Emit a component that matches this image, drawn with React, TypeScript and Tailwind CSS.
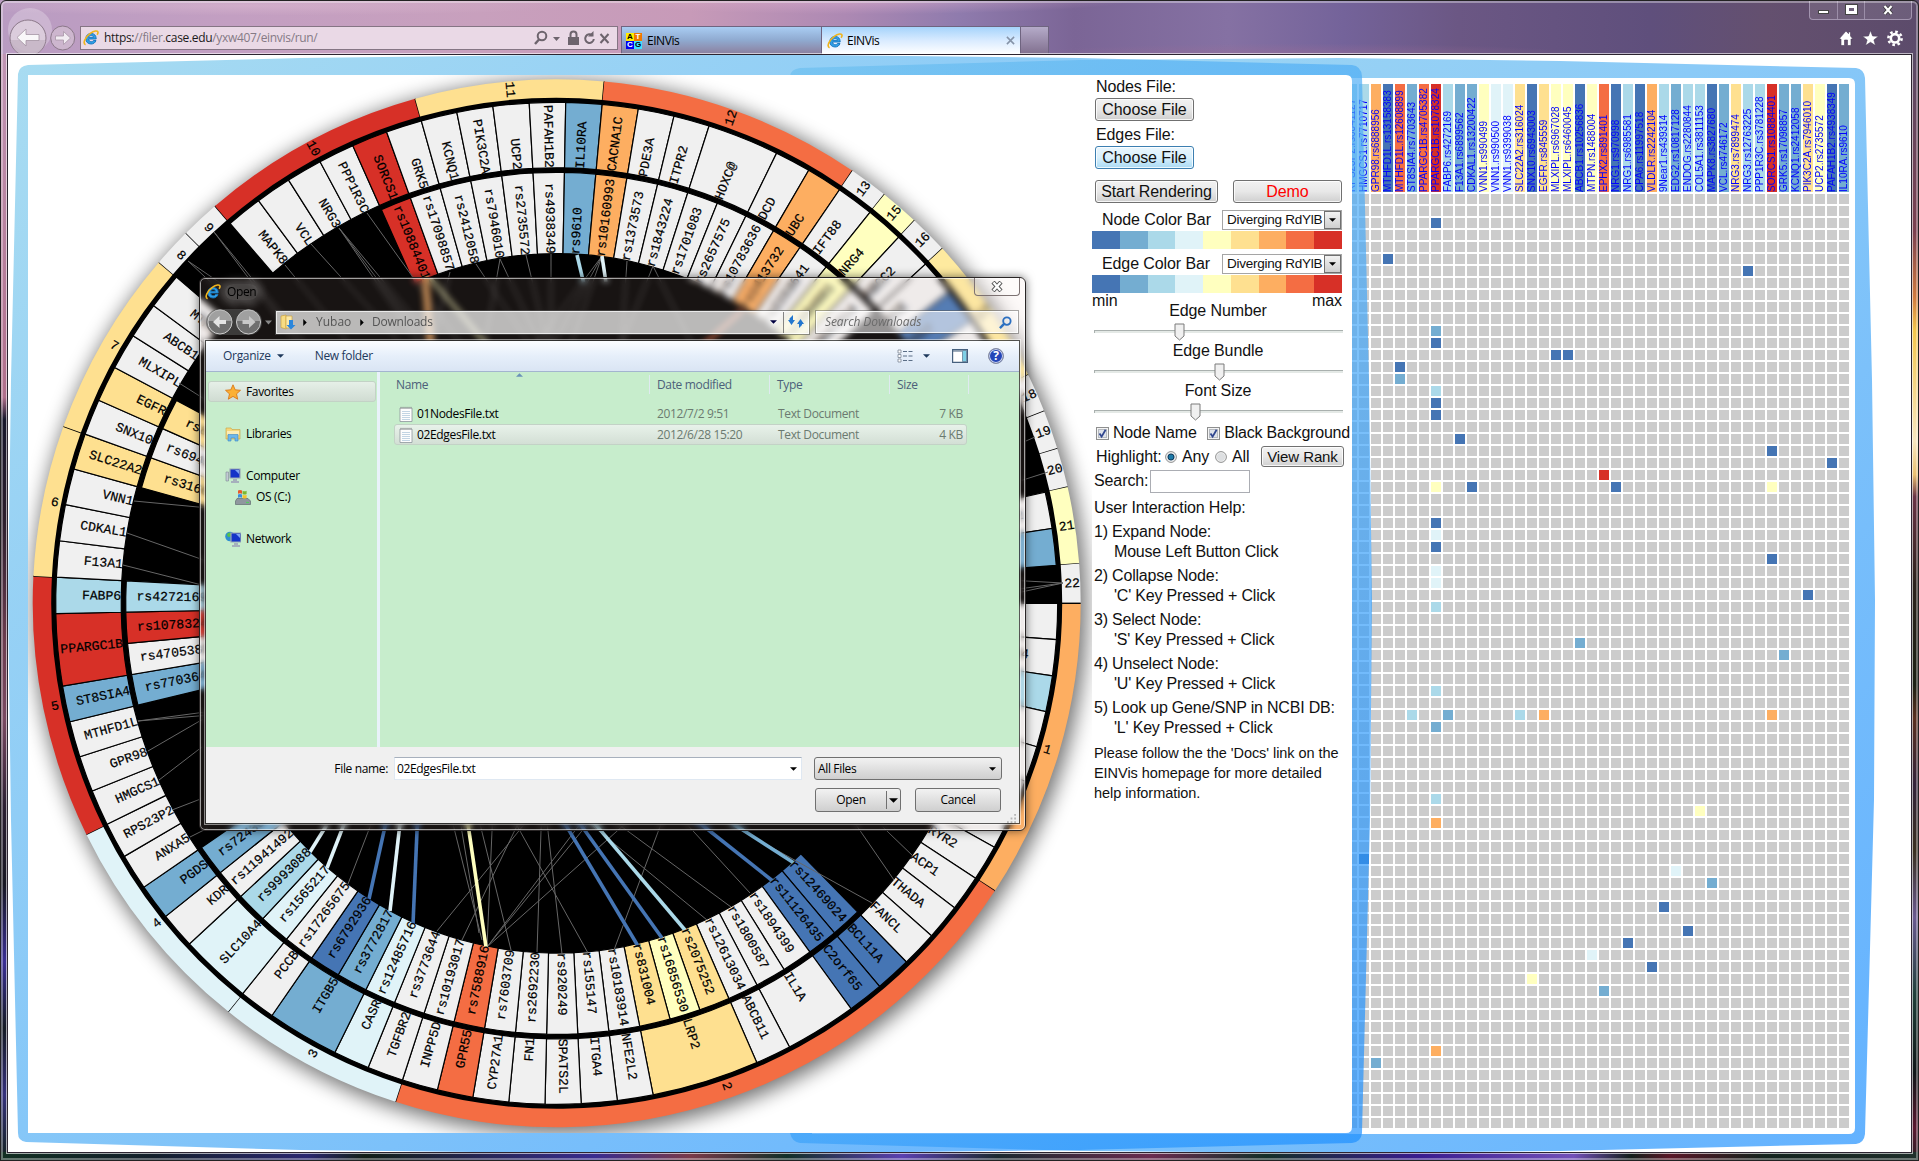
import React from "react";

const B = "#4575b4";
const M = "#74add1";
const L = "#abd9e9";
const P = "#e0f3f8";
const Y = "#ffffbf";
const G = "#fee090";
const O = "#fdae61";
const V = "#f46d43";
const R = "#d73027";
const N = "#f0f0f0";

const scaleColors = [B, M, L, P, Y, G, O, V, R];

/* ---------- Circular network view ---------- */

type Snp = [string, string];
type Gene = { n: string; c?: string; s?: Snp[] };
type Chrom = { n: string; c: string; g?: Gene[]; closed?: boolean };

const g = (n: string, c: string = N, ...s: Snp[]): Gene => ({ n, c, s });

const chroms: Chrom[] = [
  { n: "1", c: O, g: [g("PEX"), g("CD244"), g("CRP", L), g("F5"), g("FMO3"), g("LEP"), g("IL10"), g("RYR2")] },
  {
    n: "2",
    c: V,
    g: [
      g("ACP1"),
      g("THADA"),
      g("FANCL"),
      g("BCL11A", B, ["rs12469024", B]),
      g("C2orf65", B, ["rs11126435", B]),
      g("IL1A", N, ["rs1894399", N], ["rs1800587", N]),
      g("ABCB11", N, ["rs12613034", N]),
      g("LRP2", G, ["rs2075252", G], ["rs16856530", Y], ["rs831004", G]),
      g("NFE2L2", N, ["rs10183914", N]),
      g("ITGA4", N, ["rs155147", N]),
      g("SPATS2L", N, ["rs920249", N]),
      g("FN1", N, ["rs2692230", N]),
      g("CYP27A1", N, ["rs7603709", N]),
      g("GPR55", V, ["rs7588916", V]),
      g("INPP5D", N, ["rs10193017", N]),
    ],
  },
  {
    n: "3",
    c: P,
    g: [
      g("TGFBR2", N, ["rs3773644", N]),
      g("CASR", P, ["rs12485716", P]),
      g("ITGB5", M, ["rs3772817", M], ["rs6792936", B]),
      g("PCCB", N, ["rs17265675", N]),
    ],
  },
  {
    n: "4",
    c: P,
    g: [
      g("SLC10A4", P, ["rs1565217", P], ["rs9993088", L]),
      g("KDR", N, ["rs11941492", N]),
      g("PGDS", M, ["rs7243041", M]),
      g("ANXA5"),
      g("RPS23P2"),
    ],
  },
  {
    n: "5",
    c: R,
    g: [
      g("HMGCS1"),
      g("GPR98"),
      g("MTHFD1L"),
      g("ST8SIA4", M, ["rs7703643", M]),
      g("PPARGC1B", R, ["rs4705382", N], ["rs1078324", R]),
      g("FABP6", L, ["rs4272169", L]),
    ],
  },
  { n: "6", c: G, g: [g("F13A1"), g("CDKAL1"), g("VNN1"), g("SLC22A2", G, ["rs316024", G])] },
  {
    n: "7",
    c: G,
    g: [g("SNX10", N, ["rs6943003", N]), g("EGFR", G, ["rs845559", G]), g("MLXIPL"), g("ABCB1"), g("MTPN")],
  },
  { n: "8", c: N, closed: true },
  { n: "9", c: N, closed: true },
  {
    n: "10",
    c: R,
    g: [
      g("MAPK8"),
      g("VCL"),
      g("NRG3"),
      g("PPP1R3C"),
      g("SORCS1", R, ["rs10884401", R]),
      g("GRK5", N, ["rs17098857", N]),
    ],
  },
  {
    n: "11",
    c: G,
    g: [
      g("KCNQ1", N, ["rs2412058", N]),
      g("PIK3C2A", N, ["rs7946010", N]),
      g("UCP2", N, ["rs2735572", N]),
      g("PAFAH1B2", N, ["rs4938349", N]),
      g("IL10RA", M, ["rs9610", M]),
    ],
  },
  {
    n: "12",
    c: V,
    g: [
      g("CACNA1C", O, ["rs10160993", O]),
      g("PDE3A", N, ["rs1373573", N]),
      g("ITPR2", N, ["rs1843224", N]),
      g("HOXC@", N, ["rs1701083", N], ["rs2657575", N]),
      g("DCD", N, ["rs10783636", N]),
      g("UBC", O, ["rs1413732", O]),
    ],
  },
  { n: "13", c: N, g: [g("IFT88", N, ["rs2153641", N])] },
  { n: "15", c: Y, g: [g("NRG4", Y, ["rs1684601", Y])] },
  { n: "16", c: N, g: [g("ABCC2", N, ["rs8047014", N])] },
  { n: "17", c: "#feea9f", g: [g("ACE", N), g("SOST", B), g("MAPT"), g("TNK1")] },
  { n: "18", c: N, closed: true },
  { n: "19", c: N, closed: true },
  { n: "20", c: N, closed: true },
  { n: "21", c: Y, g: [g("KCNE2"), g("APP", M)] },
  { n: "22", c: N, closed: true },
];

const CX = 556.7;
const CY = 603.3;
const UNIT = 4.135;
const GAP = 0.209;

const pt = (r: number, a: number) => {
  const t = (a * Math.PI) / 180;
  return `${(CX + r * Math.cos(t)).toFixed(2)} ${(CY + r * Math.sin(t)).toFixed(2)}`;
};
const sector = (r0: number, r1: number, a0: number, a1: number) =>
  `M${pt(r1, a0)}A${r1} ${r1} 0 0 1 ${pt(r1, a1)}L${pt(r0, a1)}A${r0} ${r0} 0 0 0 ${pt(r0, a0)}Z`;

function Radial({ a, r, t }: { a: number; r: number; t: string }) {
  const flip = a > 90 && a < 270;
  return (
    <text
      transform={`rotate(${a} ${CX} ${CY}) translate(${CX + r} ${CY})${flip ? " rotate(180)" : ""}`}
      textAnchor={flip ? "end" : "start"}
      dy="3.5"
    >
      {t}
    </text>
  );
}

/* x1, y1 on the ring; x2, y2 toward the interior; last value stretches the line */
const thin: number[][] = [
  [188, 261, 210, 276, 3], [188, 261, 204, 276, 3], [214, 232, 250, 276, 2.5], [214, 232, 247, 276, 2.5],
  [285, 265, 294, 276, 7], [311, 244, 340, 276, 3], [339, 228, 375, 276, 2.5], [339, 228, 379, 276, 2.5],
  [339, 228, 372, 276, 2.5], [367, 213, 412, 276, 2.5], [450, 272, 449, 276, 16], [476, 264, 484, 276, 7],
  [500, 259, 497, 276, 6], [500, 259, 508, 276, 6], [526, 255, 531, 276, 5], [551, 254, 551, 276, 5],
  [602, 256, 587, 276, 5], [602, 256, 591, 276, 5], [602, 256, 595, 276, 5], [627, 261, 626, 276, 6],
  [653, 266, 649, 276, 8], [653, 266, 658, 276, 8], [134, 501, 198, 507, 1.1], [127, 533, 198, 558, 1.1],
  [123, 565, 198, 584, 1.1], [179, 383, 198, 395, 1.5], [138, 721, 198, 713, 1.1], [138, 721, 198, 716, 1.1],
  [148, 751, 198, 722, 1.1], [159, 780, 198, 750, 1.1], [172, 810, 198, 800, 1.1], [190, 837, 206, 829, 1.1],
  [348, 884, 368, 832, 1.2], [437, 931, 518, 832, 1.2], [487, 947, 492, 831, 1.2], [482, 940, 455, 832, 1.2],
  [479, 933, 462, 832, 1.2], [511, 950, 482, 832, 1.2], [462, 940, 514, 832, 1.2], [537, 952, 541, 831, 1.2],
  [562, 954, 548, 831, 1.2], [588, 953, 520, 831, 1.2], [614, 950, 658, 832, 1.2], [487, 947, 574, 832, 1.2],
  [487, 947, 581, 832, 1.2], [487, 947, 616, 832, 1.2], [707, 920, 600, 832, 1.2], [731, 907, 629, 832, 1.2],
  [750, 893, 694, 832, 1.2], [872, 903, 744, 832, 1.2], [894, 880, 861, 832, 1.2], [914, 857, 888, 832, 1.2],
  [1048, 472, 1026, 479, 1.2], [1035, 437, 1026, 441, 1.2], [1063, 583, 1026, 581, 1.2],
  [1063, 583, 1026, 588, 1.2], [1063, 583, 1026, 591, 1.2],
];
const thick: [number, number, number, number, string][] = [
  [638, 946, 570, 832, B], [662, 938, 586, 832, B], [685, 930, 602, 832, L], [774, 882, 711, 832, B],
  [794, 863, 746, 832, M], [310, 852, 323, 831, P], [327, 868, 341, 832, P], [369, 899, 384, 831, B],
  [390, 911, 399, 832, P], [413, 924, 417, 831, B], [486, 947, 469, 831, Y], [577, 255, 582, 276, L],
  [602, 256, 605, 276, P],
];

function Wheel() {
  const bands: React.ReactNode[] = [];
  const cells: React.ReactNode[] = [];
  const labels: React.ReactNode[] = [];
  let a = 0;
  chroms.forEach((c) => {
    const genes = c.g ?? [];
    const units = c.closed ? 1 : genes.reduce((n, x) => n + Math.max(1, x.s?.length ?? 0), 0);
    const end = a + units * UNIT + GAP;
    const step = (end - a) / units;
    bands.push(<path key={c.n} d={sector(505.5, 524, a, end)} fill={c.c} />);
    bands.push(
      <path key={c.n + "l"} d={`M${pt(500, end)}L${pt(524, end)}`} stroke="#000" strokeWidth="1.4" />
    );
    labels.push(<Radial key={"c" + c.n} a={(a + end) / 2} r={508} t={c.n} />);
    let p = a;
    genes.forEach((x) => {
      const n = Math.max(1, x.s?.length ?? 0);
      const q = p + n * step;
      cells.push(
        <path key={c.n + x.n} d={sector(435.5, 501, p, q)} fill={x.c} stroke="#000" strokeWidth="1.2" />
      );
      labels.push(<Radial key={"g" + x.n} a={(p + q) / 2} r={435.5} t={x.n} />);
      (x.s ?? []).forEach(([name, col], i) => {
        const s0 = p + i * step;
        cells.push(
          <path key={name} d={sector(349.8, 431, s0, s0 + step)} fill={col} stroke="#000" strokeWidth="1.2" />
        );
        labels.push(<Radial key={"s" + name} a={s0 + step / 2} r={349.5} t={name} />);
      });
      p = q;
    });
    a = end;
  });
  return (
    <svg viewBox="28 75 1064 1058" className="block h-[1058px] w-[1064px]">
      <defs>
        <filter id="soft" x="-20%" y="-20%" width="140%" height="140%">
          <feGaussianBlur stdDeviation="10" />
        </filter>
      </defs>
      <circle cx={CX + 3} cy={CY + 4} r={527} fill="#000" opacity="0.55" filter="url(#soft)" />
      <circle cx={CX} cy={CY} r={507} fill="#000" />
      {bands}
      {cells}
      {thin.map(([x1, y1, x2, y2, k], i) => (
        <path key={i} d={`M${x1} ${y1}L${x1 + (x2 - x1) * k} ${y1 + (y2 - y1) * k}`} stroke="#666" strokeWidth="1" />
      ))}
      {thick.map(([x1, y1, x2, y2, col], i) => (
        <path
          key={i}
          d={`M${x1} ${y1}L${x1 + (x2 - x1) * 1.3} ${y1 + (y2 - y1) * 1.3}`}
          stroke={col}
          strokeWidth="3.6"
        />
      ))}
      <path d="M425 275L431 350" stroke={O} strokeWidth="7" opacity="0.75" />
      <path d="M430 278L500 360" stroke={Y} strokeWidth="4" opacity="0.6" />
      <path d="M743 310L700 348" stroke={V} strokeWidth="4" opacity="0.7" />
      <g fill="#000" stroke="#000" strokeWidth="0.2" fontFamily="'Liberation Mono', monospace" fontSize="13.1">
        {labels}
      </g>
    </svg>
  );
}

/* ---------- Matrix view ---------- */

const columns: [string, string][] = [
  ["RPS23P2.rs6841127", L], ["HMGCS1.rs7710717", L], ["GPR98.rs6888956", O], ["MTHFD1L.rs13158383", B],
  ["MTHFD1L.rs12608899", V], ["ST8SIA4.rs7703643", M], ["PPARGC1B.rs4705382", V], ["PPARGC1B.rs1078324", R],
  ["FABP6.rs4272169", L], ["F13A1.rs6899562", M], ["CDKAL1.rs13200422", M], ["VNN1.rs990499", Y],
  ["VNN1.rs990500", P], ["VNN1.rs9399038", P], ["SLC22A2.rs316024", G], ["SNX10.rs6943003", B],
  ["EGFR.rs845559", G], ["MLXIPL.rs6967028", Y], ["MLXIPL.rs6460045", Y], ["ABCB1.rs10256836", B],
  ["MTPN.rs1488004", Y], ["EPHX2.rs891401", V], ["NRG1.rs970998", B], ["NRG1.rs6985581", L],
  ["CPA6.rs11997518", B], ["VLDLR.rs2242104", O], ["9Near1.rs439314", L], ["EDG2.rs10817128", M],
  ["ENDOG.rs2280844", L], ["COL5A1.rs3811153", L], ["MAPK8.rs3827680", B], ["VCL.rs4746172", M],
  ["NRG3.rs7899474", G], ["NRG3.rs12763225", L], ["PPP1R3C.rs3781228", L], ["SORCS1.rs10884401", R],
  ["GRK5.rs17098857", M], ["KCNQ1.rs2412058", M], ["PIK3C2A.rs7946010", G], ["UCP2.rs2735572", Y],
  ["PAFAH1B2.rs4938349", B], ["IL10RA.rs9610", M],
];

const hits: Record<string, string> = {
  "2,7": B, "5,3": B, "6,33": B, "11,7": M, "12,7": B, "13,17": B, "13,18": B, "14,4": B, "15,4": M,
  "16,7": L, "17,7": B, "18,7": B, "20,9": B, "21,35": B, "22,40": B, "23,21": R, "24,7": Y, "24,10": B,
  "24,22": B, "24,35": Y, "27,7": B, "28,7": P, "29,7": B, "30,35": B, "31,7": P, "32,7": P, "33,38": B,
  "34,7": L, "37,19": M, "38,36": M, "41,7": L, "43,5": L, "43,8": M, "43,14": L, "43,16": O, "43,35": O,
  "44,7": M, "50,7": L, "51,29": Y, "52,7": O, "55,1": B, "56,27": P, "57,30": M, "59,26": B, "61,28": B,
  "62,23": B, "63,20": P, "64,25": B, "65,15": Y, "66,21": M, "71,7": O, "72,2": M,
};

function Matrix() {
  return (
    <section className="mt-[29px] h-[1046px] w-[500px] shrink-0 overflow-hidden">
      <div className="-ml-[5px] flex w-[504px] gap-[2px]">
        {columns.map(([name, col], c) => (
          <div key={name} className="flex w-[10px] shrink-0 flex-col gap-[2px]">
            <div className="flex h-[108px] w-[10px] items-center justify-start" style={{ backgroundColor: col }}>
              <span className="h-[108px] w-[10px] rotate-180 whitespace-nowrap text-[10px] leading-[10px] text-[#0000ff] [writing-mode:vertical-rl]">
                {name}
              </span>
            </div>
            {Array.from({ length: 78 }, (_, r) => (
              <div key={r} className="h-[10px] w-[10px]" style={{ backgroundColor: hits[`${r},${c}`] ?? "#cccccc" }} />
            ))}
          </div>
        ))}
      </div>
    </section>
  );
}

/* ---------- Control panel ---------- */

function Btn({ children, className = "" }: { children: React.ReactNode; className?: string }) {
  return (
    <button
      className={
        "flex h-[23px] items-center justify-center rounded-[3px] border bg-linear-to-b text-[16px] leading-none tracking-[-0.1px] whitespace-nowrap shadow-[inset_0_0_0_1px_rgba(255,255,255,0.8)] " +
        className
      }
    >
      {children}
    </button>
  );
}
const grayBtn = "border-[#707070] from-[#f2f2f2] via-[#e8e8e8] via-50% to-[#cfcfcf]";

function ColorRow({ label }: { label: string }) {
  return (
    <div className="h-[44px]">
      <div className="flex h-[22px] items-center justify-between pl-[10px]">
        <span>{label}</span>
        <div className="flex h-[20px] w-[120px] items-center justify-between border border-[#a5a5a5] bg-white pl-[4px] text-[13.5px] tracking-[-0.25px]">
          <span className="leading-none whitespace-nowrap">Diverging RdYlB</span>
          <span className="flex h-[18px] w-[17px] items-center justify-center border border-[#707070] bg-linear-to-b from-[#f2f2f2] to-[#cfcfcf]">
            <svg viewBox="0 0 8 4" className="h-[4px] w-[7px]"><path d="M0 0H8L4 4Z" /></svg>
          </span>
        </div>
      </div>
      <div className="flex h-[18px] w-[250px]">
        {scaleColors.map((c) => (
          <div key={c} className="h-full flex-1" style={{ backgroundColor: c }} />
        ))}
      </div>
    </div>
  );
}

function Slider({ label, at }: { label: string; at: number }) {
  return (
    <div className="h-[40px]">
      <div className="h-[20px] pl-[2px] text-center leading-[20px]">{label}</div>
      <div className="relative ml-[2px] h-[20px] w-[249px] pt-[9px]">
        <div className="h-[3px] border-t border-l border-[#a9b0ae] bg-[#e4e9e6]" />
        <svg viewBox="0 0 11 18" className="absolute top-[2px] h-[18px] w-[11px]" style={{ left: at }}>
          <path d="M1 1H10V13L5.5 17L1 13Z" fill="#f0f0f0" stroke="#7a7a7a" strokeWidth="1" />
        </svg>
      </div>
    </div>
  );
}

function Check({ label }: { label: string }) {
  return (
    <span className="flex items-center gap-[4px] whitespace-nowrap">
      <svg viewBox="0 0 13 13" className="size-[13px]">
        <rect x=".5" y=".5" width="12" height="12" fill="#f4f4f4" stroke="#8e8f8f" />
        <rect x="2.5" y="2.5" width="8" height="8" fill="#dfe3ea" stroke="#b6bac0" />
        <path d="M3.5 6.5L5.6 9.6L9.6 2.8" fill="none" stroke="#31478f" strokeWidth="1.8" />
      </svg>
      {label}
    </span>
  );
}

function Radio({ on }: { on?: boolean }) {
  return (
    <svg viewBox="0 0 12 12" className="size-[12px]">
      <circle cx="6" cy="6" r="5.4" fill="#f2f2f2" stroke="#8e8f8f" />
      <circle cx="6" cy="6" r="4" fill={on ? "#cfd6dc" : "#dddfe1"} />
      {on && <circle cx="6" cy="6" r="3" fill="#1c7aa8" stroke="#0d3a5c" />}
    </svg>
  );
}

const help: [string, string][] = [
  ["1) Expand Node:", "Mouse Left Button Click"],
  ["2) Collapse Node:", "'C' Key Pressed + Click"],
  ["3) Select Node:", "'S' Key Pressed + Click"],
  ["4) Unselect Node:", "'U' Key Pressed + Click"],
  ["5) Look up Gene/SNP in NCBI DB:", "'L' Key Pressed + Click"],
];

function Controls() {
  return (
    <section className="mt-[22px] mr-[4px] w-[256px] shrink-0 text-[16px] leading-[20px] tracking-[-0.1px] text-[#111]">
      <div className="pl-[3px]">
        <div className="h-[21px] pl-[1px]">Nodes File:</div>
        <Btn className={"w-[99px] " + grayBtn}>Choose File</Btn>
        <div className="mt-[4px] h-[21px] pl-[1px]">Edges File:</div>
        <Btn className="w-[99px] border-[#3c7fb1] from-[#eaf6fd] via-[#d9f0fc] via-50% to-[#a9daf4]">Choose File</Btn>
        <div className="mt-[11px] flex gap-[15px]">
          <Btn className={"w-[123px] " + grayBtn}>Start Rendering</Btn>
          <Btn className={"w-[109px] text-[#ff0000] " + grayBtn}>Demo</Btn>
        </div>
      </div>
      <div className="mt-[6px] w-[250px]">
        <ColorRow label="Node Color Bar" />
        <ColorRow label="Edge Color Bar" />
        <div className="-mt-[6px] flex h-[10px] justify-between leading-[20px]">
          <span>min</span>
          <span>max</span>
        </div>
        <div>
          <Slider label="Edge Number" at={80} />
          <Slider label="Edge Bundle" at={120} />
          <Slider label="Font Size" at={96} />
        </div>
      </div>
      <div className="mt-px ml-[4px] flex h-[22px] w-[254px] items-center justify-between tracking-[-0.2px]">
        <Check label="Node Name" />
        <Check label="Black Background" />
      </div>
      <div className="mt-[1px] ml-[4px] flex h-[23px] items-center whitespace-nowrap">
        <span className="w-[69px]">Highlight:</span>
        <Radio on />
        <span className="ml-[5px] w-[33px]">Any</span>
        <Radio />
        <span className="ml-[5px] w-[29px]">All</span>
        <Btn className={"h-[21px]! w-[83px] text-[15px]! " + grayBtn}>View Rank</Btn>
      </div>
      <div className="mt-[1px] ml-[2px] flex h-[24px] items-center">
        <span className="w-[56px]">Search:</span>
        <div className="h-[23px] w-[100px] border border-[#abadb3] bg-white" />
      </div>
      <div className="mt-[5px] ml-[2px] h-[24px] tracking-[-0.15px] whitespace-nowrap">User Interaction Help:</div>
      {help.map(([a, b]) => (
        <div key={a} className="ml-[2px] h-[44px] tracking-[-0.2px] whitespace-nowrap">
          <div>{a}</div>
          <div className="pl-[20px]">{b}</div>
        </div>
      ))}
      <div className="mt-px ml-[2px] text-[14.5px] leading-[20px] tracking-[-0.05px] whitespace-nowrap">
        Please follow the the 'Docs' link on the
        <br />
        EINVis homepage for more detailed
        <br />
        help information.
      </div>
    </section>
  );
}

/* ---------- Shared icons ---------- */

function IELogo({ className = "" }: { className?: string }) {
  return (
    <svg viewBox="0 0 16 16" className={"size-[16px] shrink-0 " + className}>
      <path
        d="M13.2 9H5.6c.1 1.700 1.200 2.700 2.700 2.700 1 0 1.700-.4 2.100-1.200h2.600c-.7 2.200-2.500 3.500-4.900 3.500-3.100 0-5.300-2.100-5.300-5.200C2.800 5.600 5 3.400 8.100 3.400c3.200 0 5.200 2.200 5.100 5.600ZM5.700 7.300h4.800C10.300 6.100 9.400 5.300 8.100 5.300S5.900 6.100 5.700 7.300Z"
        fill="#2f9fe6"
        stroke="#1474bd"
        strokeWidth=".9"
      />
      <path d="M2.600 14.800C-.8 13.200 2.400 7 7.300 3.400 11 .6 14.800.2 15 2.200c.1.900-.4 1.900-.9 2.600" fill="none" stroke="#f0b41c" strokeWidth="1.600" />
    </svg>
  );
}

/* ---------- Browser chrome ---------- */

function TitleBar() {
  return (
    <header className="relative flex h-[54px] shrink-0 items-end font-['Open_Sans',sans-serif] text-[12px]">
      <div className="flex h-[54px] w-[80px] items-end overflow-hidden">
        <svg viewBox="0 0 80 54" className="h-[54px] w-[80px]">
          <ellipse cx="30" cy="30" rx="22" ry="22" fill="#fff" opacity=".25" />
          <circle cx="28" cy="38" r="18" fill="#e4d8e2" fillOpacity=".65" stroke="#8b7889" />
          <path d="M11 40a17 16 0 0 0 34 0Z" fill="#b9a9b9" opacity=".55" />
          <circle cx="62.700" cy="38" r="12" fill="#d9c6d6" fillOpacity=".6" stroke="#8b7889" />
          <path d="M17 37.500l9-8.500v5.500h13v6H26V46Z" fill="#fff" opacity=".85" stroke="#9c8b9a" strokeWidth=".8" />
          <path d="M70.500 38l-7-6.500v4.500h-8v4h8v4.500Z" fill="#fff" opacity=".75" stroke="#9c8b9a" strokeWidth=".8" />
        </svg>
      </div>
      <div className="mb-[4px] flex h-[24px] w-[538px] items-center border border-[#857584] bg-[#ead9e6] pl-[2px]">
        <IELogo />
        <span className="ml-[5px] flex-1 tracking-[-0.32px] whitespace-nowrap text-[#857a85]">
          <span className="text-[#1a1a1a]">https:</span>//filer.<span className="text-[#1a1a1a]">case.edu</span>/yxw407/einvis/run/
        </span>
        <svg viewBox="0 0 84 20" className="h-[20px] w-[84px]" fill="none" stroke="#6d646d" strokeWidth="2">
          <circle cx="9" cy="8" r="4.300" />
          <path d="M6 11.500L2 16" strokeWidth="2.400" />
          <path d="M20 9h7l-3.500 4Z" fill="#6d646d" stroke="none" />
          <path d="M35 9h11v8H35Z" fill="#6d646d" stroke="none" />
          <path d="M37.500 9V6.500a3 3 0 0 1 6 0V9" />
          <path d="M59.500 7.500A4.300 4.300 0 1 0 60.800 11" />
          <path d="M60.500 3v5.500H55Z" fill="#6d646d" stroke="none" />
          <path d="M67.500 6l8 9M75.500 6l-8 9" />
        </svg>
      </div>
      <div className="ml-[3px] flex h-[28px]">
        <div className="flex w-[201px] items-center border border-b-0 border-[#6f6480] bg-linear-to-b from-[#a9cdf3] via-[#8fa9cf] to-[#8b7f9e] pl-[4px]">
          <span className="grid size-[16px] grid-cols-2 text-center font-['Liberation_Sans'] text-[8px] leading-[8px] font-bold">
            <span className="bg-[#ffee00]">A</span>
            <span className="bg-[#f07800] text-white">T</span>
            <span className="bg-[#0000f0] text-white">C</span>
            <span className="bg-[#40e0ff]">G</span>
          </span>
          <span className="ml-[5px] tracking-[-0.45px]">EINVis</span>
        </div>
        <div className="flex w-[199px] items-center border-t border-r border-[#6f6480] bg-linear-to-b from-[#a5d3fb] via-[#d9ebff] to-[#ffffff] px-[5px]">
          <IELogo />
          <span className="ml-[4px] flex-1 tracking-[-0.45px]">EINVis</span>
          <svg viewBox="0 0 10 10" className="size-[9px]" stroke="#8593a8" strokeWidth="1.700"><path d="M1 1l8 8M9 1L1 9" /></svg>
        </div>
        <div className="w-[28px] border-t border-r border-[#6f6480] bg-linear-to-b from-[#b5abc9] to-[#81708f]" />
      </div>
      <div className="ml-auto flex h-full w-[110px] flex-col items-end pr-[7px]">
        <div className="flex h-[20px] w-[103px] rounded-b-[4px] border border-t-0 border-[#b9adc6]/70 bg-white/10">
          <div className="flex w-[28px] items-end justify-center border-r border-[#b9adc6]/60 pb-[5px]">
            <div className="h-[4px] w-[11px] border border-[#444] bg-white" />
          </div>
          <div className="flex w-[27px] items-center justify-center border-r border-[#b9adc6]/60">
            <div className="h-[9px] w-[11px] border-[3px] border-white outline outline-[#444]" />
          </div>
          <div className="flex flex-1 items-center justify-center">
            <svg viewBox="0 0 10 10" className="size-[10px]"><path d="M1.500 1l7 8M8.500 1l-7 8" stroke="#333" strokeWidth="3.600" /><path d="M1.500 1l7 8M8.500 1l-7 8" stroke="#fff" strokeWidth="2.200" /></svg>
          </div>
        </div>
        <svg viewBox="0 0 70 20" className="mt-[8px] mr-[6px] h-[20px] w-[70px]" fill="#fff" stroke="#4a3c58" strokeWidth=".6">
          <path d="M3 11L10 3l2.500 2.700V4h2v4L17 11h-2v6.500h-3.500V12h-3v5.500H5V11Z" />
          <path d="M34.500 2.500l2.100 5.500 5.900.3-4.600 3.600 1.600 5.700-5-3.300-5 3.300 1.600-5.700-4.600-3.600 5.900-.3Z" />
          <g stroke="#fff" fill="none">
            <circle cx="59" cy="10.300" r="4.200" strokeWidth="2.600" />
            <circle cx="59" cy="10.300" r="6.600" strokeWidth="2.600" strokeDasharray="2.600 2.580" />
          </g>
        </svg>
      </div>
    </header>
  );
}

/* ---------- File dialog ---------- */

function Caret({ className = "" }: { className?: string }) {
  return <svg viewBox="0 0 8 4" className={"h-[4px] w-[7px] shrink-0 " + className}><path d="M0 0H8L4 4Z" /></svg>;
}

function NavItem({ label, icon, className = "" }: { label: string; icon: React.ReactNode; className?: string }) {
  return (
    <div className={"flex h-[21px] items-center gap-[5px] pl-[19px] " + className}>
      <svg viewBox="0 0 16 16" className="size-[16px] shrink-0">{icon}</svg>
      <span>{label}</span>
    </div>
  );
}

const monitor = (
  <>
    <path d="M5 1h10v9H5Z" fill="#1434c8" stroke="#9aa6b5" strokeWidth="1.200" />
    <path d="M10 2h4v4Z" fill="#7fa4f2" />
    <path d="M8 11h4v2h2v2H6v-2h2Z" fill="#a6b0bc" />
  </>
);

const docType = "Text Document";

function FileRow({ name, date, size, sel }: { name: string; date: string; size: string; sel?: boolean }) {
  return (
    <div
      className={
        "ml-[14px] flex h-[21px] w-[573px] items-center rounded-[3px] border text-[#6b7a70] " +
        (sel ? "border-[#c3d2c6] bg-linear-to-b from-[#e8f2ea] to-[#d3dfd5]" : "border-transparent")
      }
    >
      <svg viewBox="0 0 14 16" className="ml-[4px] h-[16px] w-[14px]">
        <path d="M1 2h12v13.500H1Z" fill="#fdfdfd" stroke="#8d959c" strokeWidth=".8" />
        <path d="M3 5.500h8M3 7.500h8M3 9.500h8M3 11.500h8M3 13.500h8" stroke="#b3c9dc" strokeWidth=".8" />
        <path d="M2 .8v2M4 .8v2M6 .8v2M8 .8v2M10 .8v2M12 .8v2" stroke="#8a8a8a" strokeWidth=".8" />
      </svg>
      <span className="ml-[4px] w-[240px] text-black">{name}</span>
      <span className="w-[121px]">{date}</span>
      <span className="w-[120px]">{docType}</span>
      <span className="ml-auto pr-[3px]">{size}</span>
    </div>
  );
}

function Dialog() {
  return (
    <div className="absolute top-[277px] left-[199px] flex h-[554px] w-[827px] flex-col rounded-[6px] border border-[#2a2626] bg-[#e8c0bc]/10 px-[5px] pb-[6px] font-['Open_Sans',sans-serif] text-[12px] leading-[16px] tracking-[-0.35px] shadow-[0_0_10px_rgba(0,0,0,0.55),inset_0_0_0_1px_rgba(255,255,255,0.6)] backdrop-blur-[3px]">
      <div className="flex h-[28px] shrink-0 items-center">
        <IELogo />
        <span className="ml-[4px] rounded-full bg-white/20 px-[2px] text-black shadow-[0_0_8px_4px_rgba(255,255,255,0.2)]">Open</span>
        <div className="mb-auto ml-auto flex h-[18px] w-[46px] items-center justify-center rounded-b-[4px] border border-t-0 border-[#7d7272] bg-white/20">
          <svg viewBox="0 0 12 11" className="h-[11px] w-[12px]"><path d="M2 1l8 9M10 1l-8 9" stroke="#555" strokeWidth="4.200" /><path d="M2.500 1.500l7 8M9.500 1.500l-7 8" stroke="#fff" strokeWidth="2.400" /></svg>
        </div>
      </div>
      <div className="mb-[2px] flex h-[32px] shrink-0 items-center">
        <svg viewBox="0 0 70 30" className="h-[30px] w-[70px]">
          <rect x="1" y="2" width="56" height="26" rx="13" fill="#555" opacity=".6" />
          <circle cx="15" cy="15" r="12" fill="#6f6f6f" stroke="#ccc" />
          <path d="M3.500 14a11.500 11.500 0 0 1 23 0Z" fill="#b5b5b5" opacity=".7" />
          <circle cx="43.500" cy="15" r="12" fill="#6f6f6f" stroke="#ccc" />
          <path d="M32 14a11.500 11.500 0 0 1 23 0Z" fill="#b5b5b5" opacity=".7" />
          <path d="M8 15l6.500-6v4H21v4h-6.500v4Z" fill="#e4e4e4" />
          <path d="M50.500 15l-6.500-6v4h-6.500v4H44v4Z" fill="#c8c8c8" />
          <path d="M60 13.500h7l-3.500 4Z" fill="#888" />
        </svg>
        <div className="ml-px flex h-[23px] w-[533px] items-center border border-white/70 bg-white/70 outline outline-[#555]/60">
          <svg viewBox="0 0 16 16" className="ml-[3px] size-[16px]">
            <path d="M1 2l5-1v14l-5-1.500Z" fill="#f7dc83" stroke="#c79a32" strokeWidth=".6" />
            <path d="M6 2h6v12H6Z" fill="#fbe9a8" stroke="#c79a32" strokeWidth=".6" />
            <path d="M9 6h4v5h2.500L11 15.500 6.500 11H9Z" fill="#2a86dc" />
          </svg>
          <svg viewBox="0 0 4 8" className="ml-[7px] h-[7px] w-[4px]"><path d="M0 0L4 4L0 8Z" /></svg>
          <span className="ml-[9px] w-[42px] tracking-normal text-[#555]">Yubao</span>
          <svg viewBox="0 0 4 8" className="ml-[2px] h-[7px] w-[4px]"><path d="M0 0L4 4L0 8Z" /></svg>
          <span className="ml-[8px] flex-1 tracking-[-0.2px] text-[#555]">Downloads</span>
          <Caret className="mr-[6px] fill-[#000040]" />
          <span className="flex h-full w-[25px] items-center justify-center border-l border-[#555]/70">
            <svg viewBox="0 0 16 14" className="h-[14px] w-[16px]" fill="#2377cf">
              <path d="M5 0L1.500 3.500V5H0l3.500 5L7 5H5Z" />
              <path d="M11 13l3-3V9h2l-3.500-5L9 9h2Z" />
            </svg>
          </span>
        </div>
        <div className="ml-auto mr-[2px] flex h-[22px] w-[202px] items-center border border-white/80 bg-white/55 pl-[8px] outline outline-[#555]/50">
          <span className="flex-1 tracking-[-0.1px] text-[#6b6b6b] italic">Search Downloads</span>
          <svg viewBox="0 0 14 14" className="mr-[5px] size-[13px]" fill="none" stroke="#2b6fc0">
            <circle cx="8.500" cy="5.500" r="4" strokeWidth="2" />
            <path d="M5.500 8.500L1 13" strokeWidth="2.600" />
          </svg>
        </div>
      </div>
      <div className="flex min-h-0 flex-1 flex-col border border-[#333]/80 outline outline-white/50">
        <div className="flex h-[31px] shrink-0 items-center border-b border-[#a3b5cf] bg-linear-to-b from-[#fbfdff] via-[#e6effa] via-50% to-[#dae5f4] text-[#1e395b]">
          <span className="ml-[17px] tracking-[-0.3px]">Organize</span>
          <Caret className="ml-[6px] fill-[#1e395b]" />
          <span className="ml-[31px] tracking-[-0.35px]">New folder</span>
          <svg viewBox="0 0 16 14" className="ml-auto h-[14px] w-[16px]">
            <path d="M1 1h3v3H1ZM1 5.500h3v3H1ZM1 10h3v3H1Z" fill="#fff" stroke="#7b8796" strokeWidth=".8" />
            <path d="M6 2.500h4M11.500 2.500h4M6 7h4M11.500 7h4M6 11.500h4M11.500 11.500h4" stroke="#5b6e86" />
          </svg>
          <Caret className="ml-[10px] fill-[#1e395b]" />
          <svg viewBox="0 0 16 14" className="ml-[22px] h-[14px] w-[16px]">
            <path d="M.6.600h14.800v12.800H.6Z" fill="#fff" stroke="#46607e" strokeWidth="1.200" />
            <path d="M0 2h10" stroke="#46607e" />
            <path d="M10.500 1.500h4v11h-4Z" fill="#7fd0e6" stroke="#46607e" strokeWidth=".6" />
          </svg>
          <span className="mr-[15px] ml-[20px] flex size-[16px] items-center justify-center rounded-full border border-[#8a8fa0] bg-[#2546b8] text-[12px] leading-none font-bold text-white shadow-[inset_0_0_0_1px_#cdd6ee]">
            ?
          </span>
        </div>
        <div className="flex min-h-0 flex-1 bg-[#c7edcc]">
          <nav className="w-[174px] shrink-0 border-r-[3px] border-[#e9f2fa] pt-[9px]">
            <NavItem
              label="Favorites"
              className="mr-[1px] ml-[2px] rounded-[3px] border border-[#c3d2c6] bg-linear-to-b from-[#e6f0e8] to-[#d0dcd2] pl-[16px]!"
              icon={<path d="M8 .8l2.200 5 5.300.5-4 3.600 1.200 5.300L8 12.400l-4.700 2.800 1.200-5.300-4-3.600 5.300-.5Z" fill="#fbb034" stroke="#d9781a" strokeWidth=".9" />}
            />
            <NavItem
              label="Libraries"
              className="mt-[21px]"
              icon={
                <>
                  <path d="M1 2h5l1 1.500h8V13H1Z" fill="#f5d77c" stroke="#c9a03c" strokeWidth=".6" />
                  <path d="M2 5h12v4H2Z" fill="#fbedb8" />
                  <path d="M3 15V8.500h10V15h-3v-3H6v3Z" fill="#6fb7ea" stroke="#3b86c4" strokeWidth=".6" />
                </>
              }
            />
            <NavItem
              label="Computer"
              className="mt-[21px]"
              icon={<>{monitor}<path d="M1 4h2.500v9H1Z" fill="#c3cbd4" stroke="#7e8994" strokeWidth=".6" /></>}
            />
            <NavItem
              label="OS (C:)"
              className="pl-[29px]!"
              icon={
                <>
                  <path d="M2 9.500h11l2.500 2.500v3.500H.5V12Z" fill="#8f979e" stroke="#565e66" strokeWidth=".6" />
                  <path d="M3 1.500q2-1.200 4 0v3.300q-2-1-4 0Z" fill="#e8582a" />
                  <path d="M7.600 1.800q2 1 4 0v3.300q-2 1-4 0Z" fill="#7cb82f" />
                  <path d="M3 5.500q2-1.200 4 0v3.300q-2-1-4 0Z" fill="#3b8de0" />
                  <path d="M7.600 5.800q2 1 4 0v3.300q-2 1-4 0Z" fill="#f6c12c" />
                  <path d="M11 13.500h3" stroke="#4fd05a" strokeWidth="1.200" />
                </>
              }
            />
            <NavItem
              label="Network"
              className="mt-[21px]"
              icon={
                <>
                  <circle cx="5" cy="5.500" r="4.800" fill="#2f8fd0" />
                  <path d="M2 3q3-3 5 0-1 3-3 3T2 3Z" fill="#57c24a" />
                  <g transform="translate(1 1)">{monitor}</g>
                </>
              }
            />
          </nav>
          <div className="relative min-w-0 flex-1">
            <svg viewBox="0 0 8 4" className="absolute top-px left-[136px] h-[4px] w-[7px]"><path d="M0 4H8L4 0Z" fill="#6a93b8" /></svg>
            <div className="flex h-[22px] pt-[3px] text-[#4c607a]">
              <span className="w-[269px] pl-[16px] leading-[20px]">Name</span>
              <span className="w-[120px] border-l border-[#dfeaf0] pl-[7px] leading-[20px]">Date modified</span>
              <span className="w-[120px] border-l border-[#dfeaf0] pl-[7px] leading-[20px]">Type</span>
              <span className="w-[80px] border-x border-[#dfeaf0] pl-[7px] leading-[20px]">Size</span>
            </div>
            <div className="pt-[9px]">
              <FileRow name="01NodesFile.txt" date="2012/7/2 9:51" size="7 KB" />
              <FileRow name="02EdgesFile.txt" date="2012/6/28 15:20" size="4 KB" sel />
            </div>
          </div>
        </div>
        <div className="h-[76px] shrink-0 bg-[#f0f0f0] pt-[10px]">
          <div className="flex">
            <span className="w-[182px] text-right leading-[24px]">File name:</span>
            <div className="ml-[6px] flex h-[23px] w-[408px] items-center justify-between border border-[#dfe8f2] border-t-[#a7b0bd] bg-white pr-[4px] pl-[2px]">
              <span>02EdgesFile.txt</span>
              <Caret />
            </div>
            <div className="ml-[12px] flex h-[23px] w-[188px] items-center justify-between rounded-[3px] border border-[#707070] bg-linear-to-b from-[#f2f2f2] to-[#cfcfcf] pr-[5px] pl-[3px]">
              <span>All Files</span>
              <Caret />
            </div>
          </div>
          <div className="mt-[7px] flex justify-end pr-[18px]">
            <div className="flex h-[24px] w-[86px] items-center rounded-[3px] border border-[#707070] bg-linear-to-b from-[#f2f2f2] to-[#cfcfcf]">
              <span className="flex-1 text-center">Open</span>
              <span className="flex h-[18px] w-[14px] items-center justify-center border-l border-[#707070]"><Caret className="w-[9px]! h-[5px]!" /></span>
            </div>
            <div className="ml-[14px] flex h-[24px] w-[86px] items-center justify-center rounded-[3px] border border-[#707070] bg-linear-to-b from-[#f2f2f2] to-[#cfcfcf]">
              Cancel
            </div>
          </div>
          <svg viewBox="0 0 10 10" className="mt-[2px] mr-[3px] ml-auto size-[9px]" fill="#b5b5b5">
            <path d="M8 0h2v2H8ZM8 4h2v2H8ZM8 8h2v2H8ZM4 4h2v2H4ZM4 8h2v2H4ZM0 8h2v2H0Z" />
          </svg>
        </div>
      </div>
    </div>
  );
}

/* ---------- Page ---------- */

const grad = (id: string) => (
  <linearGradient id={id} x1="0" y1="0" x2="1" y2="1">
    <stop offset="0" stopColor="#81cceb" />
    <stop offset="1" stopColor="#1d8fff" />
  </linearGradient>
);

export default function App() {
  return (
    <div className="relative flex h-[1161px] w-[1919px] flex-col overflow-hidden bg-[#14181c] font-['Liberation_Sans',Arial,sans-serif]">
      <div className="absolute inset-x-0 top-0 h-[56px] bg-[linear-gradient(90deg,#b99cc2_0%,#c39fc2_12%,#c8a0bd_25%,#c79ab8_36%,#ad89b3_44%,#8f7bad_50%,#7b6596_56%,#8571a3_64%,#74639a_70%,#6b5784_76%,#5f4f7c_86%,#64506f_92%,#5c4b6b_100%)]" />
      <div className="absolute inset-x-0 top-0 h-[56px] bg-[radial-gradient(ellipse_at_45%_0%,rgba(230,180,210,0.5),transparent_18%),radial-gradient(ellipse_at_68%_100%,rgba(160,110,150,0.5),transparent_16%),radial-gradient(ellipse_at_13%_10%,rgba(230,195,215,0.4),transparent_14%)]" />
      <div className="absolute top-[54px] bottom-0 left-0 w-[8px] bg-[linear-gradient(180deg,#c095b4_0%,#b0708c_31%,#17162b_33%,#2b1d2c_42%,#6c3d50_53%,#7a4a62_60%,#2c2033_68%,#171722_75%,#3a2f94_82%,#151a24_88%,#35317c_94%,#12201c_100%)]" />
      <div className="absolute top-[54px] right-0 bottom-0 w-[8px] bg-[linear-gradient(180deg,#5a4a66_0%,#7b4050_16%,#d07a40_22%,#f3c64c_25%,#f7e6c0_35%,#e9c070_38%,#6a3345_40%,#2b221c_48%,#1c2014_57%,#5a3020_60%,#33243a_66%,#3a3020_72%,#6a5a90_78%,#20403a_85%,#101618_92%,#5a1830_97%,#2a2026_100%)]" />
      <div className="absolute inset-x-0 bottom-0 h-[9px] bg-[linear-gradient(90deg,#123022,#14202c_8%,#2c2870_16%,#122018_19%,#3a2c90_31%,#7a3a4a_36%,#123028_41%,#5b40b0_47%,#1b2a30_52%,#6a2c50_60%,#14302a_66%,#3a1c90_74%,#7250b8_82%,#14201c_85%,#5a1828_87%,#14241e_92%,#20302c)]" />

      <TitleBar />

      <main className="relative mx-[7px] h-[1099px] shrink-0 border border-[#2c2430] bg-white outline outline-white/60">
        <svg viewBox="8 55 1903 1097" className="absolute inset-0 h-[1097px] w-[1903px]">
          <defs>{grad("fb")}</defs>
          <path
            fillRule="evenodd"
            fill="url(#fb)"
            fillOpacity=".69"
            d="M800 68L1080 60L1340 58L1560 61L1856 68Q1864 69 1865 78L1872 380L1875 600L1874 800L1865 1134Q1864 1143 1856 1144L1560 1151L1340 1153L1080 1151L800 1143Q792 1142 790 1133V76Q791 69 800 68ZM812 78V1134H1849Q1855 1134 1855 1128V84Q1855 78 1849 78Z"
          />
          <rect x="28" y="75" width="1324" height="1058" rx="5" fill="#fff" />
        </svg>

        <div className="relative flex">
          <div className="mt-[20px] ml-[20px] h-[1058px] w-[1064px] shrink-0 overflow-hidden">
            <Wheel />
          </div>
          <Controls />
          <Matrix />
        </div>

        <svg viewBox="8 55 1903 1097" className="pointer-events-none absolute inset-0 h-[1097px] w-[1903px]">
          <defs>{grad("fa")}</defs>
          <path
            fillRule="evenodd"
            fill="url(#fa)"
            fillOpacity=".69"
            d="M28 65L300 58L560 55L820 55L1080 58L1352 65Q1361 66 1362 76L1369 380L1372 600L1370 820L1362 1133Q1361 1142 1352 1143L1080 1150L820 1153H560L300 1150L26 1142Q18 1141 18 1133L11 820L8 600L11 380L18 74Q19 66 28 65ZM28 75V1133H1346Q1352 1133 1352 1127V81Q1352 75 1346 75Z"
          />
        </svg>
      </main>

      <div className="pointer-events-none absolute inset-0 rounded-t-[6px] border border-[#222] shadow-[inset_0_0_0_2px_rgba(255,255,255,0.35)]" />

      <Dialog />
    </div>
  );
}
